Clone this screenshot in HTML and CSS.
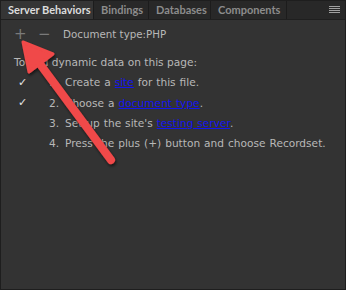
FILE: index.html
```html
<!DOCTYPE html>
<html>
<head><meta charset="utf-8"><link rel="stylesheet" href="styles.css"></head>
<body>
<div class="panel">
  <div class="tabs">
    <div class="tab active t1">Server Behaviors</div>
    <div class="tab t2">Bindings</div>
    <div class="tab t3">Databases</div>
    <div class="tab t4">Components</div>
    <div class="spacer"></div>
    <div class="menu"><span></span><span></span><span></span><span></span></div>
  </div>
  <div class="body">
    <div class="toolbar">
      <span class="btn">+</span>
      <span class="btn minus">−</span>
      <span class="doctype">Document type:PHP</span>
    </div>
    <p class="intro">To add dynamic data on this page:</p>
    <ol class="steps">
      <li><span class="check">✓</span><span class="num">1.</span><span>Create a <a href="#">site</a> for this file.</span></li>
      <li><span class="check">✓</span><span class="num">2.</span><span>Choose a <a href="#">document type</a>.</span></li>
      <li><span class="check"></span><span class="num">3.</span><span>Set up the site's <a href="#">testing server</a>.</span></li>
      <li><span class="check"></span><span class="num">4.</span><span>Press the plus (+) button and choose Recordset.</span></li>
    </ol>
  </div>
  <svg class="arrow" width="346" height="290" viewBox="0 0 346 290">
    <defs>
      <filter id="sh" x="-20%" y="-20%" width="140%" height="140%">
        <feDropShadow dx="1" dy="2" stdDeviation="1.5" flood-color="#000" flood-opacity="0.6"/>
      </filter>
    </defs>
    <g filter="url(#sh)" fill="#f04848" stroke="#f04848" stroke-linejoin="round" stroke-linecap="round">
      <line x1="111" y1="160" x2="37" y2="60" stroke-width="8"/>
      <polygon points="23,42 53,54 29,72" stroke-width="3"/>
    </g>
  </svg>
</div>
</body>
</html>
```

FILE: styles.css
```css
html, body { margin: 0; padding: 0; background: #262626; }
.panel {
  position: relative;
  width: 346px;
  height: 290px;
  box-sizing: border-box;
  border: 1px solid #1e1e1e;
  background: #333333;
  display: flex;
  flex-direction: column;
  font-family: "DejaVu Sans", sans-serif;
  overflow: hidden;
}
.tabs {
  display: flex;
  height: 18px;
  background: #282828;
  border-bottom: 1px solid #1f1f1f;
}
.tab {
  font-family: Lato, "Open Sans", sans-serif;
  font-weight: bold;
  font-size: 11px;
  line-height: 17px;
  color: #8c8c8c;
  white-space: nowrap;
  box-sizing: border-box;
  padding-left: 7px;
  border-right: 1px solid #1c1c1c;
  overflow: hidden;
}
.t1 { width: 93px; }
.t2 { width: 55px; }
.t3 { width: 62px; }
.t4 { width: 76px; }
.tab.active { background: #353535; color: #dcdcdc; }
.spacer { flex: 1; }
.menu {
  width: 11px;
  display: flex;
  flex-direction: column;
  gap: 1px;
  padding: 5px 5px 0 0;
}
.menu span { display: block; height: 1px; background: #a0a0a0; }
.body { flex: 1; padding: 0 0 0 13px; color: #b8b8b8; font-size: 10.6px; }
.toolbar { display: flex; align-items: center; height: 26px; margin-top: 1px; }
.btn { color: #7a7a7a; font-size: 15px; width: 24px; }
.doctype { color: #b8b8b8; font-size: 10.3px; margin-left: 1px; }
.intro { margin: 8px 0 0 0; line-height: 15px; }
.steps { list-style: none; margin: 2px 0 0 0; padding: 0; word-spacing: 0.6px; }
.steps li { display: flex; height: 20.4px; align-items: center; white-space: nowrap; }
.check { width: 35px; padding-left: 4px; box-sizing: border-box; color: #e6e6e6; font-size: 11px; }
.num { width: 16px; }
a { color: #1414f0; text-decoration: underline; }
.arrow { position: absolute; left: -1px; top: -1px; pointer-events: none; }
```
